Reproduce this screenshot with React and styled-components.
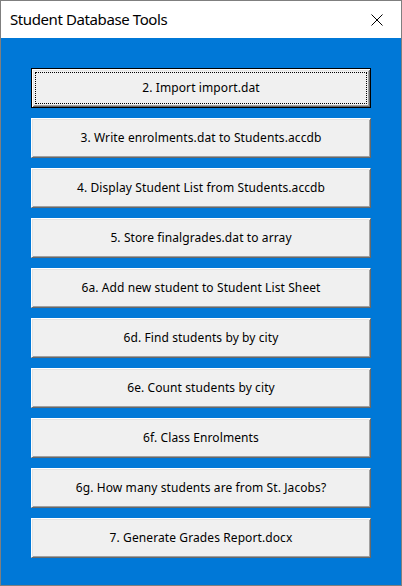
import React from "react";
import styled, { createGlobalStyle } from "styled-components";

const Global = createGlobalStyle`
  html, body { margin: 0; padding: 0; background: #ffffff; }
  body { font-family: "Noto Sans", "Open Sans", "DejaVu Sans", sans-serif; }
`;

const Window = styled.div`
  width: 402px;
  height: 586px;
  box-sizing: border-box;
  border: 1px solid #7f7f7f;
  display: flex;
  flex-direction: column;
  background: #ffffff;
`;

const TitleBar = styled.div`
  height: 37px;
  flex: 0 0 auto;
  display: flex;
  align-items: center;
  justify-content: space-between;
  padding: 0 0 0 9px;
  background: #ffffff;
`;

const Title = styled.span`
  font-size: 15px;
  color: #000000;
  letter-spacing: -0.4px;
  margin-top: -1px;
`;

const CloseBox = styled.div`
  width: 46px;
  height: 37px;
  display: flex;
  align-items: center;
  justify-content: center;
  margin-right: 1px;
`;

const Body = styled.div`
  flex: 1 1 auto;
  background: #0078d7;
  padding: 30px 0 0 30px;
  display: flex;
  flex-direction: column;
  gap: 10px;
`;

const Button = styled.button`
  position: relative;
  width: 340px;
  height: 40px;
  box-sizing: border-box;
  margin: 0;
  padding: 0;
  background: #f0f0f0;
  font-family: "Noto Sans", "Open Sans", sans-serif;
  font-size: 12px;
  letter-spacing: 0.1px;
  color: #000000;
  display: flex;
  align-items: center;
  justify-content: center;
  cursor: default;
  border-style: solid;
  border-width: 1px;
  border-color: ${(p) =>
    p.$focused ? "#000000" : "#ffffff #696969 #696969 #ffffff"};
  box-shadow: ${(p) =>
    p.$focused
      ? "inset 1px 1px 0 #ffffff, inset -1px -1px 0 #696969, inset 2px 2px 0 #e3e3e3, inset -2px -2px 0 #a0a0a0"
      : "inset 1px 1px 0 #e3e3e3, inset -1px -1px 0 #a0a0a0"};
  outline: none;
`;

const FocusRing = styled.span`
  position: absolute;
  left: 3px;
  top: 3px;
  right: 3px;
  bottom: 3px;
  border: 1px dotted #000000;
  pointer-events: none;
`;

const Label = styled.span`
  margin-top: -1px;
  white-space: nowrap;
`;

const items = [
  "2. Import import.dat",
  "3. Write enrolments.dat to Students.accdb",
  "4. Display Student List from Students.accdb",
  "5. Store finalgrades.dat to array",
  "6a. Add new student to Student List Sheet",
  "6d. Find students by by city",
  "6e. Count students by city",
  "6f. Class Enrolments",
  "6g. How many students are from St. Jacobs?",
  "7. Generate Grades Report.docx",
];

export default function App() {
  return (
    <>
      <Global />
      <Window>
        <TitleBar>
          <Title>Student Database Tools</Title>
          <CloseBox>
            <svg width="12" height="12" viewBox="0 0 12 12">
              <path d="M0.5 0.5 L11.5 11.5 M11.5 0.5 L0.5 11.5" stroke="#000" strokeWidth="1" fill="none" />
            </svg>
          </CloseBox>
        </TitleBar>
        <Body>
          {items.map((t, i) => (
            <Button key={t} $focused={i === 0}>
              {i === 0 && <FocusRing />}
              <Label>{t}</Label>
            </Button>
          ))}
        </Body>
      </Window>
    </>
  );
}
